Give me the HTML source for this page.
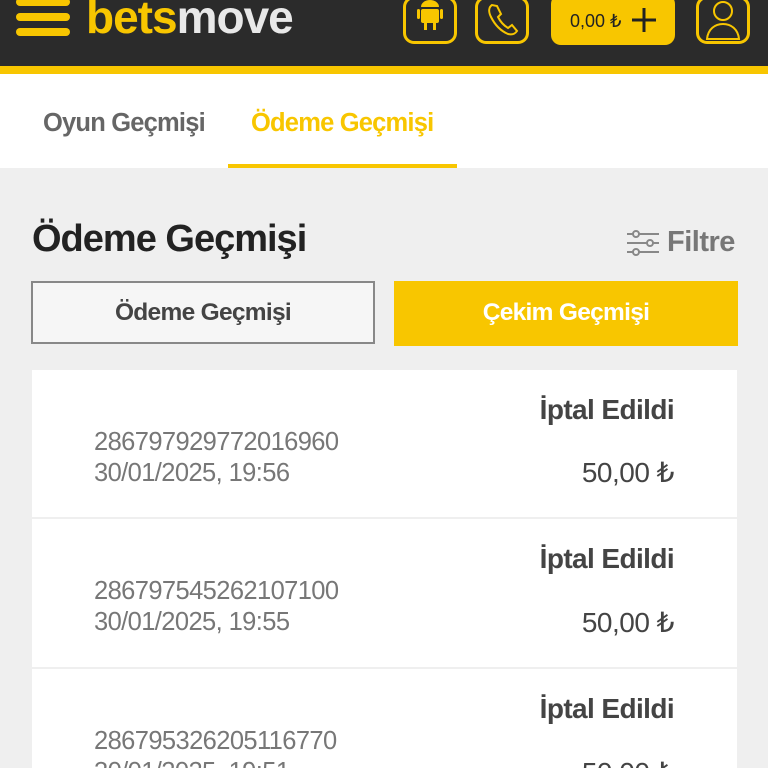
<!DOCTYPE html>
<html><head><meta charset="utf-8"><style>
*{margin:0;padding:0;box-sizing:border-box}
html,body{width:768px;height:768px;overflow:hidden}
body{background:#efefef;font-family:"Liberation Sans",sans-serif;position:relative}
.abs{position:absolute}
.hdr{left:0;top:0;width:768px;height:66px;background:#2b2b2b}
.ybar{left:0;top:66px;width:768px;height:8px;background:#f8c600}
.tabs{left:0;top:74px;width:768px;height:94px;background:#fff}
.ib{border:3px solid #f8c600;border-radius:11px;width:54px;height:48px;top:-4px}
.card{left:32px;width:705px;height:147px;background:#fff}
.st{right:94px;font-size:28px;font-weight:bold;color:#444;letter-spacing:-0.6px;white-space:nowrap}
.id{left:94px;font-size:25.5px;color:#777;letter-spacing:-0.6px;line-height:31px}
.am{right:94px;font-size:28px;color:#444;letter-spacing:-0.5px}
</style></head><body>
<div class="abs hdr"></div>
<div class="abs" style="left:16px;top:-2px;width:54px;height:8px;background:#f8c600;border-radius:4px"></div>
<div class="abs" style="left:16px;top:13px;width:54px;height:8px;background:#f8c600;border-radius:4px"></div>
<div class="abs" style="left:16px;top:28px;width:54px;height:8px;background:#f8c600;border-radius:4px"></div>
<div class="abs" style="left:86px;top:-10px;font-size:46px;font-weight:bold;letter-spacing:-1px"><span style="color:#f8c600">bets</span><span style="color:#e8e8e8">move</span></div>
<div class="abs ib" style="left:403px"><svg width="48" height="42" viewBox="0 0 48 42"><rect x="15" y="10" width="18" height="14" rx="2" fill="#f8c600"/><path d="M15 8a9 7 0 0 1 18 0z" fill="#f8c600"/><rect x="11" y="10" width="3" height="10" rx="1.5" fill="#f8c600"/><rect x="34" y="10" width="3" height="10" rx="1.5" fill="#f8c600"/><rect x="18" y="23" width="3" height="8" fill="#f8c600"/><rect x="27" y="23" width="3" height="8" fill="#f8c600"/></svg></div>
<div class="abs ib" style="left:475px"><svg width="48" height="42" viewBox="0 0 48 42"><path d="M14 6c-3 2-4 6-1 12 4 8 10 14 17 17 4 1 7 0 9-3l-5-6-4 3c-5-3-8-7-10-11l3-3-4-8z" fill="none" stroke="#f8c600" stroke-width="2"/></svg></div>
<div class="abs" style="left:551px;top:-6px;width:124px;height:51px;background:#f8c600;border-radius:10px;font-size:18px;color:#222;padding:17px 0 0 19px">0,00 ₺</div>
<svg class="abs" style="left:630px;top:6px" width="28" height="28" viewBox="0 0 28 28"><path d="M14 2v24M2 14h24" stroke="#222" stroke-width="3"/></svg>
<div class="abs ib" style="left:696px"><svg width="48" height="42" viewBox="0 0 48 42"><circle cx="24" cy="12" r="9" fill="none" stroke="#f8c600" stroke-width="2"/><path d="M8 40c1-10 8-15 16-15s15 5 16 15z" fill="none" stroke="#f8c600" stroke-width="2"/></svg></div>
<div class="abs ybar"></div>
<div class="abs tabs"></div>
<div class="abs" style="left:43px;top:109px;font-size:25.5px;color:#666;font-weight:bold;letter-spacing:-0.8px">Oyun Geçmişi</div>
<div class="abs" style="left:251px;top:109px;font-size:25.5px;color:#f8c600;font-weight:bold;letter-spacing:-0.8px">Ödeme Geçmişi</div>
<div class="abs" style="left:228px;top:164px;width:229px;height:4px;background:#f8c600"></div>
<div class="abs" style="left:32px;top:218px;font-size:38px;font-weight:bold;color:#222;letter-spacing:-1px">Ödeme Geçmişi</div>
<svg class="abs" style="left:626px;top:229px" width="34" height="28" viewBox="0 0 34 28"><g stroke="#888" stroke-width="2" fill="none"><line x1="1" y1="5" x2="33" y2="5"/><line x1="1" y1="14" x2="33" y2="14"/><line x1="1" y1="23" x2="33" y2="23"/><circle cx="10" cy="5" r="3" fill="#efefef"/><circle cx="24" cy="14" r="3" fill="#efefef"/><circle cx="10" cy="23" r="3" fill="#efefef"/></g></svg>
<div class="abs" style="left:667px;top:226px;font-size:29px;color:#777;font-weight:bold;letter-spacing:-0.5px">Filtre</div>
<div class="abs" style="left:31px;top:281px;width:344px;height:63px;border:2px solid #888;background:#f6f6f6;font-size:24.5px;font-weight:bold;color:#444;text-align:center;line-height:59px;letter-spacing:-0.7px">Ödeme Geçmişi</div>
<div class="abs" style="left:394px;top:281px;width:344px;height:65px;background:#f8c600;font-size:24.5px;font-weight:bold;color:#fff;text-align:center;line-height:63px;letter-spacing:-0.7px">Çekim Geçmişi</div>

<div class="abs card" style="top:370px"></div>
<div class="abs st" style="top:394px">İptal Edildi</div>
<div class="abs id" style="top:427px">286797929772016960<br>30/01/2025, 19:56</div>
<div class="abs am" style="top:456px">50,00 ₺</div>

<div class="abs card" style="top:519px;height:148px"></div>
<div class="abs st" style="top:543px">İptal Edildi</div>
<div class="abs id" style="top:576px">286797545262107100<br>30/01/2025, 19:55</div>
<div class="abs am" style="top:606px">50,00 ₺</div>

<div class="abs card" style="top:669px;height:99px"></div>
<div class="abs st" style="top:693px">İptal Edildi</div>
<div class="abs id" style="top:726px">286795326205116770<br>30/01/2025, 19:51</div>
<div class="abs am" style="top:756px">50,00 ₺</div>
</body></html>
